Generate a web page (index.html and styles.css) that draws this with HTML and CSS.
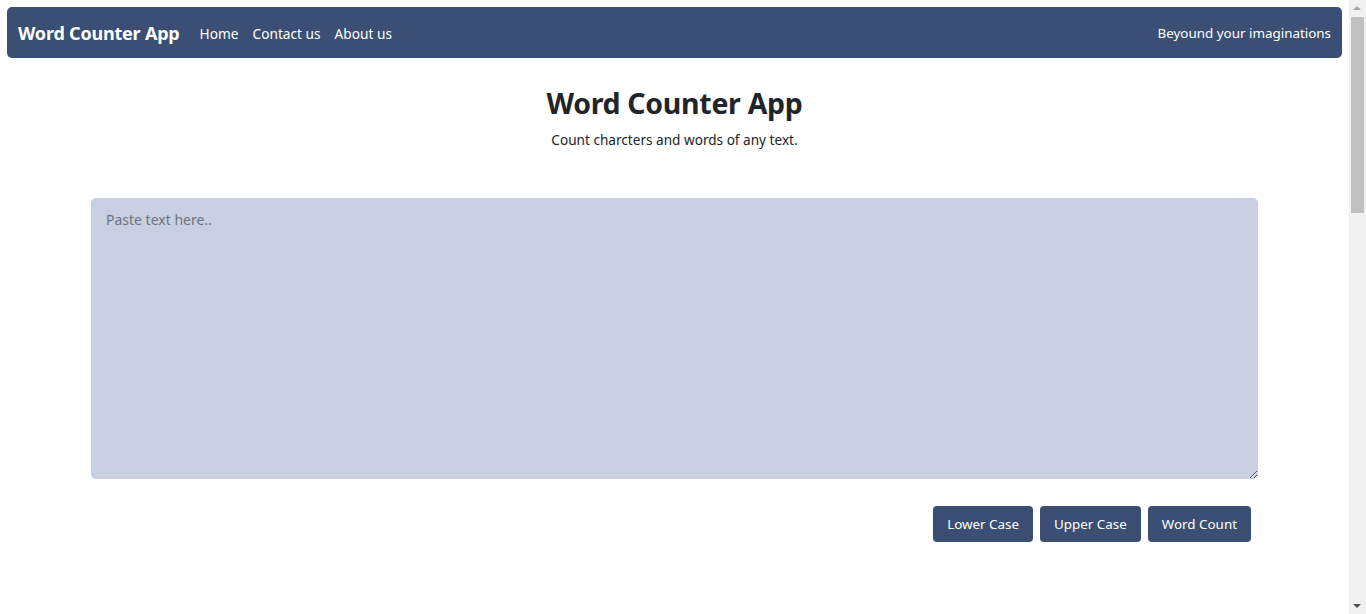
FILE: index.html
```html
<!DOCTYPE html>
<html lang="en">
<head>
<meta charset="utf-8">
<title>Word Counter App</title>
<link rel="stylesheet" href="styles.css">
</head>
<body>
<div class="page">
  <nav class="navbar">
    <a class="brand" href="#">Word Counter App</a>
    <ul class="nav-links">
      <li><a href="#">Home</a></li>
      <li><a href="#">Contact us</a></li>
      <li><a href="#">About us</a></li>
    </ul>
    <span class="tagline">Beyound your imaginations</span>
  </nav>
  <main class="container">
    <header class="intro">
      <h2 class="title">Word Counter App</h2>
      <p class="subtitle">Count charcters and words of any text.</p>
    </header>
    <textarea class="text-input" placeholder="Paste text here.."></textarea>
    <div class="actions">
      <button class="btn">Lower Case</button>
      <button class="btn">Upper Case</button>
      <button class="btn">Word Count</button>
    </div>
  </main>
</div>
<div class="scrollbar" aria-hidden="true">
  <span class="arrow up"></span>
  <span class="thumb"></span>
  <span class="track"></span>
  <span class="arrow down"></span>
</div>
</body>
</html>
```
FILE: styles.css
```css
* { box-sizing: border-box; }
html, body { margin: 0; padding: 0; }
body {
  font-family: "Segoe UI", "Noto Sans", "Open Sans", sans-serif;
  color: #212529;
  background: #fff;
}
.page {
  margin-right: 17px;
}
.navbar {
  margin: 7px 7px 0 7px;
  height: 51px;
  background: #3a4f73;
  border-radius: 5px;
  display: flex;
  align-items: center;
  padding: 0 11px 0 11px;
  color: #fff;
}
.brand {
  color: #fff;
  text-decoration: none;
  font-weight: 700;
  font-size: 18px;
  margin-right: 20px;
  letter-spacing: -0.2px;
}
.nav-links {
  list-style: none;
  margin: 0;
  padding: 0;
  display: flex;
  gap: 14px;
}
.nav-links a {
  color: #fff;
  text-decoration: none;
  font-size: 13.7px;
}
.tagline {
  margin-left: auto;
  font-size: 13.4px;
}
.container {
  width: 1167px;
  margin: 0 auto;
}
.intro {
  text-align: center;
  padding-top: 26px;
}
.title {
  margin: 0;
  font-size: 28.5px;
  font-weight: 700;
  line-height: 38px;
  letter-spacing: -0.3px;
}
.subtitle {
  margin: 8px 0 0 0;
  font-size: 13.6px;
  line-height: 20px;
}
.text-input {
  display: block;
  width: 100%;
  height: 281px;
  margin-top: 48px;
  background: #c7cfe1;
  border: none;
  border-radius: 5px;
  padding: 12px 15px;
  font-family: inherit;
  font-size: 14px;
  color: #212529;
  resize: vertical;
}
.text-input::placeholder { color: #6c7480; }
.actions {
  display: flex;
  justify-content: flex-end;
  gap: 7px;
  padding-right: 7px;
  margin-top: 27px;
}
.btn {
  height: 36px;
  padding: 0 14px;
  background: #3a4f73;
  color: #fff;
  border: none;
  border-radius: 4px;
  font-family: inherit;
  font-size: 13.4px;
  cursor: pointer;
}
.scrollbar {
  position: fixed;
  top: 0;
  right: 0;
  width: 17px;
  height: 100vh;
  background: #f1f1f1;
  display: flex;
  flex-direction: column;
  align-items: center;
}
.arrow {
  height: 17px;
  width: 17px;
  flex: none;
  position: relative;
}
.arrow::after {
  content: "";
  position: absolute;
  left: 4px;
  width: 0;
  height: 0;
  border-left: 4.5px solid transparent;
  border-right: 4.5px solid transparent;
}
.arrow.up::after {
  top: 6px;
  border-bottom: 4.5px solid #a3a3a3;
}
.arrow.down::after {
  top: 7px;
  border-top: 4.5px solid #505050;
}
.thumb {
  width: 13px;
  height: 196px;
  flex: none;
  background: #c1c1c1;
}
.track { flex: 1; }
```
